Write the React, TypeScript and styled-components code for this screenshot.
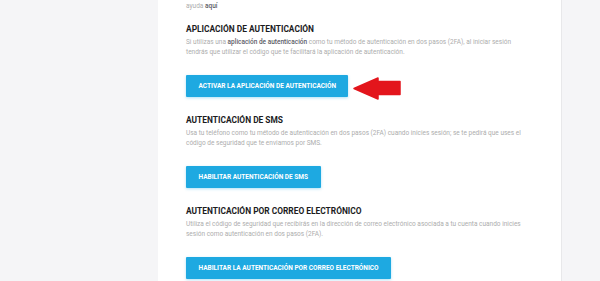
import styled, { createGlobalStyle } from 'styled-components';

const GlobalStyle = createGlobalStyle`
  html, body {
    margin: 0;
    padding: 0;
    height: 100%;
    overflow: hidden;
    background: #f5f5f7;
    font-family: Roboto, "Liberation Sans", Arial, sans-serif;
  }
  #root { height: 100%; }
`;

const Page = styled.div`
  display: flex;
  height: 100%;
  padding-left: 158px;
`;

const Card = styled.main`
  width: 404px;
  box-sizing: border-box;
  background: #ffffff;
  border-right: 1px solid #e8e8ea;
  padding: 0 28px;
  display: flex;
  flex-direction: column;
`;

const Intro = styled.p`
  margin: -8px 0 0;
  font-size: 6.5px;
  line-height: 9.5px;
  color: #adadad;
`;

const Section = styled.section`
  display: flex;
  flex-direction: column;
  align-items: flex-start;
  margin-top: 13px;

  & + & {
    margin-top: 18px;
  }
`;

const Heading = styled.h2`
  margin: 0 0 4px;
  font-size: 8.4px;
  line-height: 10px;
  font-weight: 700;
  color: #1c1c1e;
`;

const Text = styled.p`
  margin: 0 0 18px;
  font-size: 6.5px;
  line-height: 9.5px;
  color: #adadad;
`;

const Strong = styled.span`
  color: #5c5c66;
  font-weight: 500;
`;

const ButtonWrap = styled.div`
  position: relative;
  display: flex;
`;

const ActionButton = styled.button`
  height: 22px;
  padding: 0 12.5px;
  border: none;
  border-radius: 1px;
  background: #1ea9e1;
  box-shadow: 0 1px 3px rgba(30, 169, 225, 0.35);
  color: #ffffff;
  font-family: Roboto, "Liberation Sans", Arial, sans-serif;
  font-size: 6.5px;
  font-weight: 700;
  white-space: nowrap;
  cursor: pointer;
`;

const Pointer = styled.svg`
  position: absolute;
  left: calc(100% + 5px);
  top: 2px;
`;

const RedArrow = () => (
  <Pointer width="48" height="23" viewBox="0 0 48 23">
    <path
      d="M1 11.5 L25 1 L25 4.5 L47 4.5 L47 17.5 L25 17.5 L25 22 Z"
      fill="#e3151c"
      stroke="#e3151c"
      strokeWidth="1.5"
      strokeLinejoin="round"
    />
  </Pointer>
);

type MethodProps = {
  title: string;
  text: React.ReactNode;
  buttonText: string;
  highlighted?: boolean;
};

const Method: React.FC<MethodProps> = (props) => (
  <Section>
    <Heading>{props.title}</Heading>
    <Text>{props.text}</Text>
    <ButtonWrap>
      <ActionButton>{props.buttonText}</ActionButton>
      {props.highlighted && <RedArrow />}
    </ButtonWrap>
  </Section>
);

export default function App() {
  return (
    <>
      <GlobalStyle />
      <Page>
        <Card>
          <Intro>
            Si necesitas más información sobre la autenticación en dos pasos, puedes consultar nuestra página de
            <br />
            ayuda <Strong>aquí</Strong>
          </Intro>
          <Method
            title="APLICACIÓN DE AUTENTICACIÓN"
            text={
              <>
                Si utilizas una <Strong>aplicación de autenticación</Strong> como tu método de autenticación en dos
                pasos (2FA), al iniciar sesión tendrás que utilizar el código que te facilitará la aplicación de
                autenticación.
              </>
            }
            buttonText="ACTIVAR LA APLICACIÓN DE AUTENTICACIÓN"
            highlighted
          />
          <Method
            title="AUTENTICACIÓN DE SMS"
            text="Usa tu teléfono como tu método de autenticación en dos pasos (2FA) cuando inicies sesión; se te pedirá que uses el código de seguridad que te enviamos por SMS."
            buttonText="HABILITAR AUTENTICACIÓN DE SMS"
          />
          <Method
            title="AUTENTICACIÓN POR CORREO ELECTRÓNICO"
            text="Utiliza el código de seguridad que recibirás en la dirección de correo electrónico asociada a tu cuenta cuando inicies sesión como autenticación en dos pasos (2FA)."
            buttonText="HABILITAR LA AUTENTICACIÓN POR CORREO ELECTRÓNICO"
          />
        </Card>
      </Page>
    </>
  );
}
